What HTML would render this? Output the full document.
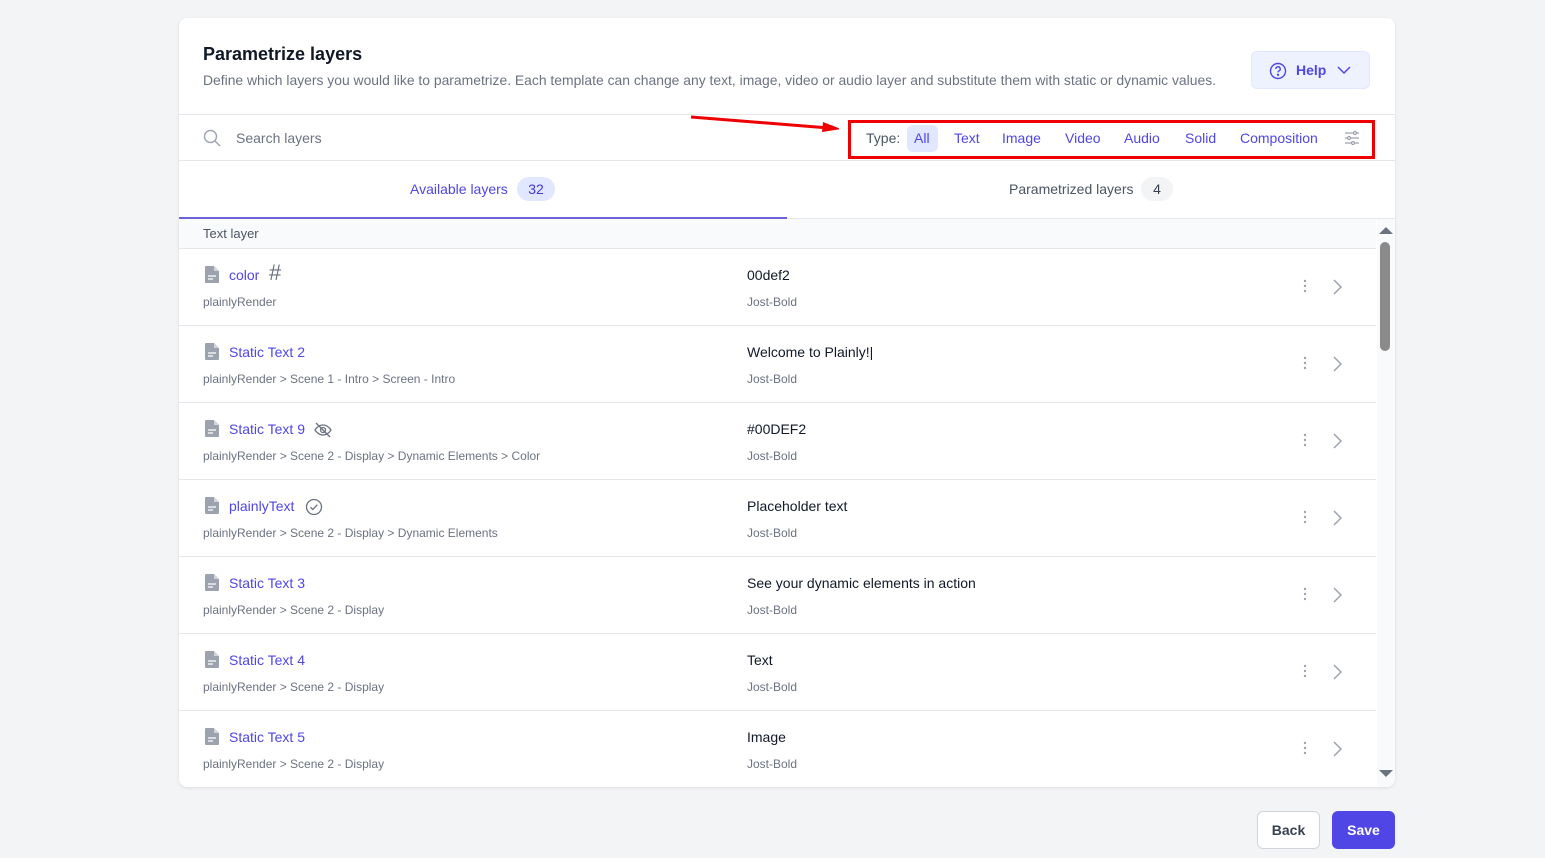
<!DOCTYPE html>
<html><head><style>
*{box-sizing:border-box;margin:0;padding:0}
body{width:1545px;height:858px;background:#f3f4f6;font-family:"Liberation Sans",sans-serif;position:relative;overflow:hidden;color:#111827}
.card{position:absolute;left:179px;top:18px;width:1216px;height:769px;background:#fff;border-radius:8px;box-shadow:0 1px 3px rgba(0,0,0,.1);overflow:hidden}
.abs{position:absolute;white-space:nowrap}
h1{position:absolute;left:24px;top:26px;font-size:18px;font-weight:600;color:#111827}
.desc{left:24px;top:54px;font-size:13.9px;color:#6b7280}
.help{position:absolute;left:1072px;top:33px;width:119px;height:38px;background:#eef2ff;border-radius:6px;border:1px solid #e0e7ff;color:#4f46e5;font-size:14px;font-weight:600}
.line{position:absolute;left:0;width:1216px;height:1px;background:#e5e7eb}
.types span{position:absolute;top:112px;font-size:14px;color:#4f46e5}
.row{position:absolute;left:0;width:1197px;height:77px;border-bottom:1px solid #e5e7eb}
.row .n{position:absolute;left:50px;top:18px;font-size:14px;color:#4f46e5;font-weight:500}
.row .p{position:absolute;left:24px;top:46px;font-size:12px;color:#6b7280;white-space:nowrap}
.row .v{position:absolute;left:568px;top:18px;font-size:14px;color:#111827;white-space:nowrap}
.row .f{position:absolute;left:568px;top:46px;font-size:12px;color:#6b7280}
.row svg.doc{position:absolute;left:26px;top:17px}
.row .dots{position:absolute;left:1124px;top:30px}
.row .chev{position:absolute;left:1153px;top:30px}
.btn{position:absolute;top:811px;height:38px;border-radius:6px;font-size:14px;font-weight:600;display:flex;align-items:center;justify-content:center}
</style></head><body>
<div class="card">
<h1>Parametrize layers</h1>
<div class="abs desc">Define which layers you would like to parametrize. Each template can change any text, image, video or audio layer and substitute them with static or dynamic values.</div>
<div class="help"><svg class="abs" style="left:17px;top:10px" width="18" height="18" viewBox="0 0 18 18" fill="none" stroke="#4f46e5" stroke-width="1.4"><circle cx="9" cy="9" r="7.5"/><path d="M6.8 7a2.2 2.2 0 1 1 3 2c-.6.3-.8.7-.8 1.4"/><circle cx="9" cy="12.8" r=".5" fill="#4f46e5"/></svg><span class="abs" style="left:44px;top:10px">Help</span><svg class="abs" style="left:85px;top:12px" width="14" height="12" viewBox="0 0 14 12" fill="none" stroke="#4f46e5" stroke-width="1.5"><path d="M1 3l6 6 6-6"/></svg></div>
<div class="line" style="top:96px"></div>
<svg class="abs" style="left:24px;top:111px" width="18" height="18" viewBox="0 0 18 18" fill="none" stroke="#9ca3af" stroke-width="1.4"><circle cx="7.5" cy="7.5" r="6"/><path d="M12 12l5 5"/></svg>
<div class="abs" style="left:57px;top:112px;font-size:14px;color:#6b7280">Search layers</div>
<svg class="abs" style="left:510px;top:96px" width="150" height="20"><path d="M2 3L140 14" stroke="#e00" stroke-width="3"/><path d="M134 8l18 7-19 3z" fill="#e00"/></svg>
<div class="abs" style="left:669px;top:102px;width:527px;height:39px;border:3px solid #e00"></div>
<div class="abs" style="left:728px;top:107px;width:31px;height:27px;background:#e0e7ff;border-radius:6px"></div>
<div class="types"><span style="left:687px;color:#4b5563">Type:</span><span style="left:735px">All</span><span style="left:775px">Text</span><span style="left:823px">Image</span><span style="left:886px">Video</span><span style="left:945px">Audio</span><span style="left:1006px">Solid</span><span style="left:1061px">Composition</span></div>
<svg class="abs" style="left:1165px;top:112px" width="16" height="16" viewBox="0 0 16 16" stroke="#9ca3af" stroke-width="1.2" fill="none"><path d="M1 3h14M1 8h14M1 13h14"/><circle cx="11" cy="3" r="1.5" fill="#fff"/><circle cx="5" cy="8" r="1.5" fill="#fff"/><circle cx="9" cy="13" r="1.5" fill="#fff"/></svg>
<div class="line" style="top:142px"></div>
<div class="abs" style="left:231px;top:163px;font-size:14px;color:#4f46e5;font-weight:500">Available layers</div>
<div class="abs" style="left:338px;top:159px;width:38px;height:24px;border-radius:12px;background:#e0e7ff;color:#4338ca;font-size:14px;text-align:center;line-height:24px">32</div>
<div class="abs" style="left:830px;top:163px;font-size:14px;color:#4b5563;font-weight:500">Parametrized layers</div>
<div class="abs" style="left:962px;top:159px;width:32px;height:24px;border-radius:12px;background:#f3f4f6;color:#374151;font-size:14px;text-align:center;line-height:24px">4</div>
<div class="line" style="top:200px;background:#e5e7eb"></div>
<div class="abs" style="left:0;top:199px;width:608px;height:2px;background:#6d63d8"></div>
<div class="abs" style="left:0;top:201px;width:1197px;height:30px;background:#f9fafb;border-bottom:1px solid #e5e7eb"></div>
<div class="abs" style="left:24px;top:208px;font-size:13px;color:#4b5563;font-weight:500">Text layer</div>
<div class="abs" style="left:1198px;top:201px;width:18px;height:568px;background:#f9fafb"></div>
<div class="abs" style="left:1201px;top:224px;width:10px;height:109px;border-radius:5px;background:#8a8a8a"></div>
<svg class="abs" style="left:1200px;top:208px" width="14" height="8"><path d="M0 8L7 1 14 8z" fill="#6b7280"/></svg>
<svg class="abs" style="left:1200px;top:752px" width="14" height="8"><path d="M0 0L7 7 14 0z" fill="#6b7280"/></svg>

<div id="rows"></div>
</div>
<div class="btn" style="left:1257px;width:63px;background:#fff;border:1px solid #d1d5db;color:#374151">Back</div>
<div class="btn" style="left:1332px;width:63px;background:#4f46e5;color:#fff">Save</div>
<script>
var d=[["color","plainlyRender","00def2","hash"],["Static Text 2","plainlyRender &gt; Scene 1 - Intro &gt; Screen - Intro","Welcome to Plainly!|",""],["Static Text 9","plainlyRender &gt; Scene 2 - Display &gt; Dynamic Elements &gt; Color","#00DEF2","eye"],["plainlyText","plainlyRender &gt; Scene 2 - Display &gt; Dynamic Elements","Placeholder text","check"],["Static Text 3","plainlyRender &gt; Scene 2 - Display","See your dynamic elements in action",""],["Static Text 4","plainlyRender &gt; Scene 2 - Display","Text",""],["Static Text 5","plainlyRender &gt; Scene 2 - Display","Image",""]];
var w={"color":32,"Static Text 2":77,"Static Text 9":77,"plainlyText":68};
var h="";
d.forEach(function(r,i){
var top=231+i*77,ic="",x=50+(w[r[0]]||77)+8;
if(r[3]=="hash")ic='<span style="position:absolute;left:'+x+'px;top:11px;font-size:22px;color:#6b7280;font-weight:300">#</span>';
if(r[3]=="eye")ic='<svg style="position:absolute;left:'+x+'px;top:18px" width="18" height="18" viewBox="0 0 18 18" fill="none" stroke="#6b7280" stroke-width="1.3"><path d="M1 9s3-5 8-5 8 5 8 5-3 5-8 5-8-5-8-5z"/><circle cx="9" cy="9" r="2.5"/><path d="M2 2l14 14"/></svg>';
if(r[3]=="check")ic='<svg style="position:absolute;left:'+x+'px;top:18px" width="18" height="18" viewBox="0 0 18 18" fill="none" stroke="#6b7280" stroke-width="1.3"><circle cx="9" cy="9" r="7.5"/><path d="M5.5 9.2l2.3 2.3 4.5-4.8"/></svg>';
h+='<div class="row" style="top:'+top+'px"><svg class="doc" width="14" height="17" viewBox="0 0 14 17"><path d="M1 0h8l5 5v11a1 1 0 0 1-1 1H1a1 1 0 0 1-1-1V1a1 1 0 0 1 1-1z" fill="#9ca3af"/><path d="M9 0v5h5" fill="#d1d5db"/><path d="M3 10h8M3 13h5" stroke="#fff" stroke-width="1.3"/></svg><div class="n">'+r[0]+'</div>'+ic+'<div class="p">'+r[1]+'</div><div class="v">'+r[2]+'</div><div class="f">Jost-Bold</div><svg class="dots" width="4" height="14"><circle cx="2" cy="2" r="1.2" fill="#9ca3af"/><circle cx="2" cy="7" r="1.2" fill="#9ca3af"/><circle cx="2" cy="12" r="1.2" fill="#9ca3af"/></svg><svg class="chev" width="10" height="16" fill="none" stroke="#9ca3af" stroke-width="1.5"><path d="M2 1l7 7-7 7"/></svg></div>';
});
document.getElementById("rows").innerHTML=h;
</script>
</body></html>
